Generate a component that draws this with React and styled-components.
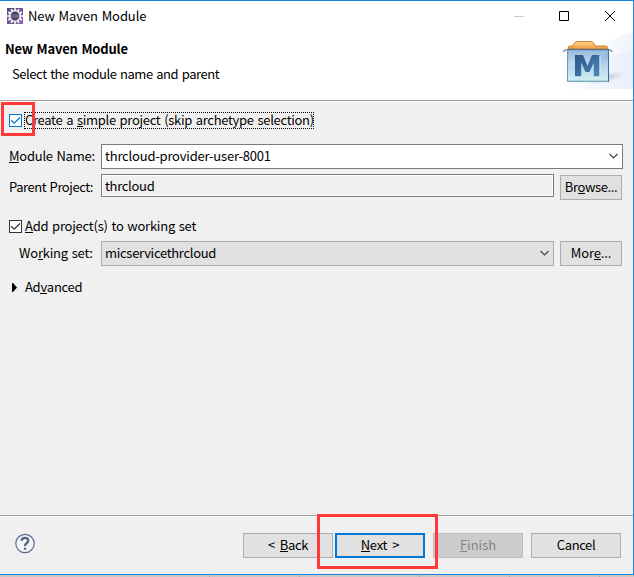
import React from "react";
import styled, { createGlobalStyle, css } from "styled-components";

const Global = createGlobalStyle`
  *, *::before, *::after { box-sizing: border-box; }
  html, body { margin: 0; padding: 0; overflow: hidden; }
  body { background: #cdcbca; }
  button, input { font: inherit; }
`;

const Desktop = styled.div`
  position: relative;
  width: 634px;
  height: 577px;
  background: #cbc9c8;
  font-family: "Noto Sans CJK SC", "Noto Sans", sans-serif;
  font-size: 13px;
  line-height: 18px;
  color: #000;
`;
const Dialog = styled.main`
  display: flex;
  flex-direction: column;
  height: 575px;
  background: #f0f0f0;
  border: solid #1883d7;
  border-width: 1px 1px 1px 0;
`;
const TitleBar = styled.header`
  display: flex;
  align-items: center;
  height: 29px;
  padding-left: 7px;
  background: #fff;
`;
const WindowButton = styled.span`
  display: flex;
  align-items: center;
  justify-content: center;
  width: ${(p) => p.$width || 46}px;
  height: 29px;
`;
const WindowButtons = styled.div`
  display: flex;
  margin-left: auto;
`;
const Label = styled.span`
  white-space: pre;
  letter-spacing: ${(p) => p.$track || 0}px;
  word-spacing: ${(p) => p.$gap || 0}px;
  u { text-decoration: none; box-shadow: inset 0 -1px #000; display: inline-block; line-height: 15px; }
`;
const Title = styled(Label)`
  margin-left: 5px;
`;
const Banner = styled.section`
  display: flex;
  justify-content: space-between;
  height: 72px;
  background: #fff;
  border-bottom: 1px solid #fff;
  box-shadow: inset 0 -1px #a0a0a0;
`;
const BannerText = styled.div`
  display: flex;
  flex-direction: column;
  padding: 10px 0 0 5px;
  gap: 7px;
`;
const Heading = styled.h1`
  margin: 0;
  font-size: 13px;
  line-height: 18px;
  font-weight: 700;
  letter-spacing: -0.2px;
  word-spacing: 1px;
`;
const Description = styled(Label)`
  padding-left: 7px;
`;
const Form = styled.section`
  flex: 1;
  display: flex;
  flex-direction: column;
  padding: 10px 10px 0 9px;
`;
const CheckRow = styled.label`
  display: flex;
  align-items: center;
  height: 17px;
  gap: 2px;
  margin-bottom: ${(p) => p.$after}px;
`;
const CheckBox = styled.span`
  display: flex;
  width: 13px;
  height: 13px;
  background: #fff;
  border: 1px solid ${(p) => (p.$active ? "#0078d7" : "#333")};
  color: ${(p) => (p.$active ? "#0078d7" : "#333")};
`;
const CheckLabel = styled(Label)`
  height: 17px;
  line-height: 15px;
  padding-left: 1px;
  ${(p) => p.$focused && css`
    width: 290px;
    outline: 1px dotted #000;
    outline-offset: -1px;
  `}
`;
const FieldRow = styled.div`
  display: flex;
  align-items: flex-start;
  height: 25px;
  margin-bottom: ${(p) => p.$after}px;
`;
const FieldLabel = styled(Label)`
  width: 92px;
  padding-left: ${(p) => p.$indent || 0}px;
  padding-top: ${(p) => p.$drop || 3}px;
`;
const Combo = styled.div`
  display: flex;
  align-items: center;
  justify-content: space-between;
  width: ${(p) => p.$width}px;
  height: 25px;
  padding: 0 4px 1px 3px;
  background: ${(p) => (p.$readOnly ? "#e1e1e1" : "#fff")};
  border: 1px solid ${(p) => (p.$readOnly ? "#adadad" : "#7a7a7a")};
`;
const ReadOnlyField = styled.div`
  display: flex;
  align-items: center;
  width: 453px;
  height: 23px;
  margin-top: -1px;
  padding: 0 3px;
  border: 1px solid #7a7a7a;
  box-shadow: inset 0 0 0 1px #fff;
`;
const Button = styled.button`
  display: flex;
  align-items: center;
  justify-content: center;
  flex: none;
  width: ${(p) => p.$width || 90}px;
  height: 25px;
  padding: 0 0 2px;
  color: #000;
  background: #e1e1e1;
  border: 1px solid #adadad;
  border-radius: 0;
  ${(p) => p.$primary && css`border: 2px solid #0078d7;`}
  &:disabled {
    color: #838383;
    background: #ccc;
    border-color: #bfbfbf;
    u { box-shadow: inset 0 -1px #838383; }
  }
`;
const SideButton = styled(Button)`
  margin-left: 6px;
`;
const Expander = styled.div`
  display: flex;
  align-items: center;
  gap: 8px;
  padding-left: 3px;
  height: 18px;
`;
const Footer = styled.footer`
  display: flex;
  align-items: flex-start;
  justify-content: space-between;
  height: 59px;
  padding: 17px 12px 0 15px;
  border-top: 1px solid #a0a0a0;
  box-shadow: inset 0 1px #fff;
`;
const ButtonBar = styled.div`
  display: flex;
  gap: 8px;
`;
const Pair = styled.div`
  display: flex;
  gap: 2px;
`;
const Backdrop = styled.div`
  display: grid;
  grid-template-columns: 210px 90px 120px 90px 90px 34px;
  height: 2px;
`;
const BackdropCell = styled.span`
  border-right: 1px solid #b0aeae;
  &:last-child { border-right: 0; }
`;
const Highlight = styled.div`
  position: absolute;
  left: ${(p) => p.$x}px;
  top: ${(p) => p.$y}px;
  width: ${(p) => p.$w}px;
  height: ${(p) => p.$h}px;
  border: 3px solid #ff3939;
  pointer-events: none;
`;

const Tick = () => (
  <svg width="11" height="11" viewBox="0 0 11 11" fill="none" stroke="currentColor" strokeWidth="1.25">
    <path d="M1.2 5.2 4.2 8.2 9.9 2.5" />
  </svg>
);
const Chevron = () => (
  <svg width="9" height="6" viewBox="0 0 9 6" fill="none" stroke="#444" strokeWidth="1.15">
    <path d="M.5 1 4.5 5 8.5 1" />
  </svg>
);
const teeth = Array.from({ length: 12 }, (_, i) => i * 30);
const Gear = () => (
  <svg width="16" height="16" viewBox="0 0 16 16">
    <defs>
      <linearGradient id="gearBack" x1="0" y1="0" x2="1" y2="1">
        <stop offset="0" stopColor="#57457f" /><stop offset="1" stopColor="#8b6cae" />
      </linearGradient>
      <linearGradient id="gearCore" x1="0" y1="0" x2="0" y2="1">
        <stop offset="0" stopColor="#272044" /><stop offset=".5" stopColor="#706b8e" /><stop offset="1" stopColor="#302653" />
      </linearGradient>
    </defs>
    <path fill="url(#gearBack)" d="M0 0h16v16H0z" />
    {teeth.map((a) => <path key={a} d="M7.1.2h1.8v3H7.1z" fill="#f4f3f6" transform={`rotate(${a} 8 8)`} />)}
    <circle cx="8" cy="8" r="5.3" fill="url(#gearCore)" stroke="#f1f0f3" strokeWidth="1.6" />
  </svg>
);
const MavenArt = () => (
  <svg width="83" height="70" viewBox="550 30 83 70">
    <defs>
      <linearGradient id="boxFill" x1="0" y1="0" x2="0" y2="1">
        <stop offset="0" stopColor="#7fa9d5" /><stop offset=".45" stopColor="#b5d0e8" /><stop offset="1" stopColor="#d0f2f1" />
      </linearGradient>
      <linearGradient id="tabFill" x1="0" y1="0" x2="0" y2="1">
        <stop offset="0" stopColor="#ffd491" /><stop offset="1" stopColor="#ee9c38" />
      </linearGradient>
      <linearGradient id="haze" x1="0" y1="0" x2="1" y2="0">
        <stop offset="0" stopColor="#fff" /><stop offset="1" stopColor="#e8eefa" />
      </linearGradient>
      <linearGradient id="hazeTop" x1="0" y1="0" x2="1" y2="0">
        <stop offset="0" stopColor="#f9fafe" /><stop offset="1" stopColor="#f0f4fc" />
      </linearGradient>
      <linearGradient id="letter" x1="0" y1="0" x2="1" y2="1">
        <stop offset="0" stopColor="#285687" /><stop offset="1" stopColor="#5086b8" />
      </linearGradient>
      <radialGradient id="shade"><stop offset="0" stopColor="#99a" stopOpacity=".55" /><stop offset="1" stopColor="#bbc" stopOpacity="0" /></radialGradient>
    </defs>
    <path d="M603 48C612 39 622 33 633 32v57h-30z" fill="url(#hazeTop)" />
    <path d="M560 89c24-6 36-33 73-38v38z" fill="url(#haze)" />
    <ellipse cx="606" cy="78" rx="20" ry="5" fill="url(#shade)" transform="rotate(-15 606 78)" />
    <path d="M568.500 49v-2q0-1 2-1h1.500l3-3.500q1-1 3-1h12q2 0 3 1l2.500 3.500h10q2 0 2 1.500V49z" fill="url(#tabFill)" stroke="#c77722" strokeWidth=".9" />
    <path d="M563.500 52q1-2.500 4-2.500h40q4 0 4.500 2.500" fill="none" stroke="#999" strokeWidth="1.700" />
    <path d="M567.500 49.500h41v32h-41z" fill="url(#boxFill)" stroke="#6f9cc1" />
    <path d="M608.500 49v33" stroke="#336f9f" />
    <path d="M567 49.500h42" stroke="#5d7088" />
    <path d="M568 81h40" stroke="#8abac5" />
    <path d="M568.500 51h39v3q-18 10-39 13z" fill="#fff" opacity=".18" />
    <path d="M575 76.500v-21.500h8l4.500 11 4.500-11h7.500v21.500h-5.700v-14l-4.300 9.500h-4l-4.300-9.500v14z" fill="url(#letter)" />
    <path d="M575 77h6M594 77h6M600 56v20" fill="none" stroke="#e3f7fb" strokeWidth=".8" />
  </svg>
);
const Help = () => (
  <svg width="20" height="21" viewBox="0 0 20 21">
    <circle cx="10" cy="10.500" r="9.200" fill="#f4f5f7" stroke="#5b6d91" strokeWidth="1.200" />
    <path d="M6.700 7.800Q6.700 4.800 10 4.800t3.300 2.800q0 1.500-1.700 2.600T10 13.100" fill="none" stroke="#536486" strokeWidth="2.300" />
    <path d="M8.900 14.700h2.300v2H8.900z" fill="#536486" />
  </svg>
);

export default function App() {
  return (
    <Desktop>
      <Global />
      <Dialog>
        <TitleBar>
          <Gear />
          <Title $track={-0.1} $gap={1}>New Maven Module</Title>
          <WindowButtons>
            <WindowButton $width={44}><svg width="10" height="10"><path d="M0 5h10v1H0z" fill="#ccc" /></svg></WindowButton>
            <WindowButton><svg width="10" height="10"><path d="M.5.5h9v9h-9z" fill="none" stroke="#000" /></svg></WindowButton>
            <WindowButton><svg width="10" height="10"><path d="m0 0 10 10M10 0 0 10" stroke="#000" /></svg></WindowButton>
          </WindowButtons>
        </TitleBar>
        <Banner>
          <BannerText>
            <Heading>New Maven Module</Heading>
            <Description $track={-0.43} $gap={1}>Select the module name and parent</Description>
          </BannerText>
          <MavenArt />
        </Banner>
        <Form>
          <CheckRow $after={15}>
            <CheckBox $active><Tick /></CheckBox>
            <CheckLabel $focused $track={-0.31} $gap={1.2}>Create a <u>s</u>imple project (skip archetype selection)</CheckLabel>
          </CheckRow>
          <FieldRow $after={6}>
            <FieldLabel $track={-0.25} $gap={1}><u>M</u>odule Name:</FieldLabel>
            <Combo $width={522}><Label $track={-0.2}>thrcloud-provider-user-8001</Label><Chevron /></Combo>
          </FieldRow>
          <FieldRow $after={18}>
            <FieldLabel $track={-0.45} $gap={1}>Parent Project:</FieldLabel>
            <ReadOnlyField><Label $track={-0.3}>thrcloud</Label></ReadOnlyField>
            <SideButton $width={62}><Label $track={-0.4}>Br<u>o</u>wse...</Label></SideButton>
          </FieldRow>
          <CheckRow $after={6}>
            <CheckBox><Tick /></CheckBox>
            <CheckLabel $track={-0.22} $gap={1}><u>A</u>dd project(s) to working set</CheckLabel>
          </CheckRow>
          <FieldRow $after={12}>
            <FieldLabel $indent={10} $track={-0.2} $gap={1}>Wo<u>r</u>king set:</FieldLabel>
            <Combo $width={453} $readOnly><Label $track={-0.3}>micservicethrcloud</Label><Chevron /></Combo>
            <SideButton $width={62}><Label $track={-0.15}>Mor<u>e</u>...</Label></SideButton>
          </FieldRow>
          <Expander>
            <svg width="5" height="9"><path d="M0 0h1L5 4.500 1 9H0z" fill="#000" /></svg>
            <Label $track={-0.3}>Ad<u>v</u>anced</Label>
          </Expander>
        </Form>
        <Footer>
          <Help />
          <ButtonBar>
            <Pair>
              <Button><Label $track={-0.35} $gap={2.5}>&lt; <u>B</u>ack</Label></Button>
              <Button $primary><Label $track={-0.25} $gap={2.5}><u>N</u>ext &gt;</Label></Button>
            </Pair>
            <Button disabled><Label><u>F</u>inish</Label></Button>
            <Button><Label $track={-0.4}>Cancel</Label></Button>
          </ButtonBar>
        </Footer>
      </Dialog>
      <Backdrop>
        <BackdropCell /><BackdropCell /><BackdropCell />
        <BackdropCell /><BackdropCell /><BackdropCell />
      </Backdrop>
      <Highlight $x={1} $y={102} $w={34} $h={34} />
      <Highlight $x={317} $y={514} $w={121} $h={55} />
    </Desktop>
  );
}
